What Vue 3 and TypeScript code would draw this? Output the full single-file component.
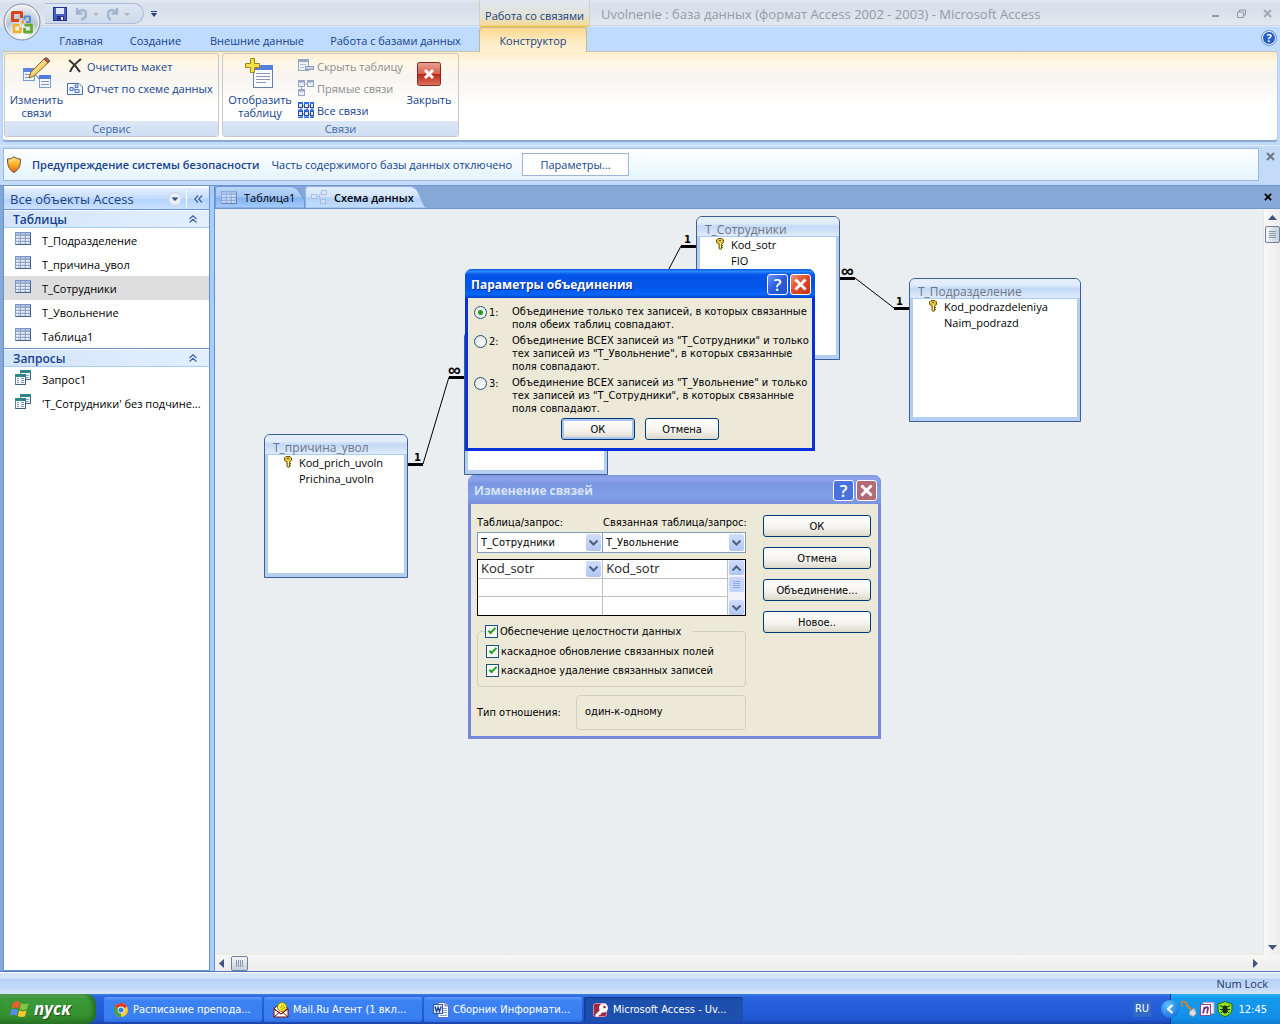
<script setup lang="ts">
import { ref } from 'vue'

interface NavGroup {
  title: string
  icon: string
  items: string[]
}
interface TableNode {
  id: string
  title: string
  fields: string[]
  x: number
  y: number
  w: number
}
interface Task {
  icon: string
  label: string
  active?: boolean
}

const menuTabs: string[] = ['Главная', 'Создание', 'Внешние данные', 'Работа с базами данных']

const navGroups: NavGroup[] = [
  { title: 'Таблицы', icon: 'i-table', items: ['Т_Подразделение', 'Т_причина_увол', 'Т_Сотрудники', 'Т_Увольнение', 'Таблица1'] },
  { title: 'Запросы', icon: 'i-query', items: ['Запрос1', "'Т_Сотрудники' без подчине..."] },
]
const selected = ref('Т_Сотрудники')

const nodes: TableNode[] = [
  { id: 'staff', title: 'Т_Сотрудники', fields: ['Kod_sotr', 'FIO'], x: 481, y: 7, w: 144 },
  { id: 'dept', title: 'Т_Подразделение', fields: ['Kod_podrazdeleniya', 'Naim_podrazd'], x: 694, y: 69, w: 172 },
  { id: 'fired', title: '', fields: [], x: 249, y: 122, w: 144 },
  { id: 'reason', title: 'Т_причина_увол', fields: ['Kod_prich_uvoln', 'Prichina_uvoln'], x: 49, y: 225, w: 144 },
]

const joinType = ref(1)
const joinOptions: string[] = [
  'Объединение только тех записей, в которых связанные\nполя обеих таблиц совпадают.',
  'Объединение ВСЕХ записей из "Т_Сотрудники" и только\nтех записей из "Т_Увольнение", в которых связанные\nполя совпадают.',
  'Объединение ВСЕХ записей из "Т_Увольнение" и только\nтех записей из "Т_Сотрудники", в которых связанные\nполя совпадают.',
]

const integrity = ref(true)
const cascadeUpdate = ref(true)
const cascadeDelete = ref(true)

const tasks: Task[] = [
  { icon: 'i-chrome', label: 'Расписание препода...' },
  { icon: 'i-mail', label: 'Mail.Ru Агент (1 вкл...' },
  { icon: 'i-word', label: 'Сборник Информати...' },
  { icon: 'i-access', label: 'Microsoft Access - Uv...', active: true },
]
</script>

<template>
  <div class="screen">
    <svg class="defs" width="0" height="0" aria-hidden="true">
      <defs>
        <linearGradient id="g-cell" x1="0" y1="0" x2="1" y2="1">
          <stop offset="0" stop-color="#ffffff" />
          <stop offset="1" stop-color="#b9c8e6" />
        </linearGradient>
        <linearGradient id="g-shield" x1="0" y1="0" x2="0" y2="1">
          <stop offset="0" stop-color="#ffe27a" />
          <stop offset="0.45" stop-color="#fdb62f" />
          <stop offset="1" stop-color="#e8600c" />
        </linearGradient>
        <linearGradient id="g-red" x1="0" y1="0" x2="0" y2="1">
          <stop offset="0" stop-color="#e9a397" />
          <stop offset="0.5" stop-color="#d9604f" />
          <stop offset="0.5" stop-color="#b92514" />
          <stop offset="1" stop-color="#e0765f" />
        </linearGradient>
        <symbol id="i-table" viewBox="0 0 16 13">
          <rect x="0" y="0" width="16" height="13" fill="#44618f" />
          <rect x="1" y="1" width="14" height="2" fill="#a9bfe6" />
          <g fill="url(#g-cell)">
            <rect x="1" y="4" width="4" height="2" /><rect x="6" y="4" width="4" height="2" /><rect x="11" y="4" width="4" height="2" />
            <rect x="1" y="7" width="4" height="2" /><rect x="6" y="7" width="4" height="2" /><rect x="11" y="7" width="4" height="2" />
            <rect x="1" y="10" width="4" height="2" /><rect x="6" y="10" width="4" height="2" /><rect x="11" y="10" width="4" height="2" />
          </g>
          <path d="M1 3.500H15M1 6.500H15M1 9.500H15M5.500 1V12M10.500 1V12" stroke="#8fa3c8" />
          <path d="M0.500 13V0.500H16" fill="none" stroke="#7d97c6" />
        </symbol>
        <symbol id="i-query" viewBox="0 0 16 15">
          <rect x="5.500" y="0.500" width="10" height="9" fill="#f4f8fc" stroke="#6d8d9a" />
          <rect x="5" y="0" width="11" height="3" fill="#2f8585" />
          <path d="M11 5.500H14M11 7.500H14" stroke="#86a3b4" />
          <rect x="0.500" y="4.500" width="10" height="10" fill="#f4f8fc" stroke="#6b7f99" />
          <rect x="0" y="4" width="11" height="3" fill="#2f8585" />
          <path d="M2 8.500H4M6 8.500H9M2 10.500H4M6 10.500H9M2 12.500H4M6 12.500H9" stroke="#8097b0" />
          <path d="M15.500 3V9.500H11M10.500 7V14.500H1" fill="none" stroke="#3c5f86" />
        </symbol>
        <symbol id="i-key" viewBox="0 0 8 12">
          <path d="M2 0.500H6L7.500 2V4.500L5.500 6V11L4.500 11.500L3 10.500V6L0.500 4.500V2Z" fill="#e3c23c" stroke="#6b5410" />
          <path d="M3 2.500H5" stroke="#6b5410" />
          <path d="M4.500 5V10" stroke="#fff2a0" />
          <path d="M5 7.500H7M5 9.500H7" stroke="#6b5410" />
        </symbol>
        <symbol id="i-chrome" viewBox="0 0 16 16">
          <circle cx="8" cy="8" r="7" fill="#f7c92f" />
          <path d="M8 8L1.900 4.500A7 7 0 0 1 14.100 4.500Z" fill="#dd3b2a" />
          <path d="M8 8L1.900 4.500A7 7 0 0 0 8 15Z" fill="#3f9e49" />
          <circle cx="8" cy="8" r="3.400" fill="#fff" /><circle cx="8" cy="8" r="2.600" fill="#3f7fd6" />
        </symbol>
        <symbol id="i-mail" viewBox="0 0 16 16">
          <path d="M1 6.500H15V15H1Z" fill="#fff" stroke="#7a1010" />
          <path d="M1 6.500L8 1L15 6.500L8 12Z" fill="#fff" stroke="#7a1010" />
          <circle cx="9" cy="5" r="4.500" fill="#f8f236" stroke="#8b7d12" />
          <path d="M1 7L8 12L15 7M1 15L6 10.500M15 15L10 10.500" fill="none" stroke="#7a1010" />
          <path d="M7 6L11 3M8 8L12 5" stroke="#a59a18" />
        </symbol>
        <symbol id="i-word" viewBox="0 0 16 16">
          <path d="M5 0.500H12L15.500 4V15.500H5Z" fill="#fff" stroke="#5671ab" />
          <path d="M12 0.500V4H15.500" fill="#c9d8f2" stroke="#5671ab" />
          <path d="M10 6.500H14M10 8.500H14M10 10.500H14M7 13.500H14" stroke="#7d9bd6" />
          <rect x="0.500" y="2.500" width="9" height="9" fill="#dfeafc" stroke="#3158a8" />
          <path d="M2 4.500L3.500 9.500L5 5.500L6.500 9.500L8 4.500" fill="none" stroke="#24479a" stroke-width="1.400" />
        </symbol>
        <symbol id="i-access" viewBox="0 0 16 16">
          <rect x="0.500" y="1.500" width="13" height="13" rx="2" fill="#a02843" stroke="#d98b9a" />
          <circle cx="10.500" cy="6" r="4.500" fill="#fff" />
          <path d="M8 7L2.500 12.500V14.500H5.500L6 13H7.500L8 11.500L11 9Z" fill="#fff" />
          <circle cx="11.500" cy="5" r="1.300" fill="#a02843" />
        </symbol>
        <symbol id="i-x" viewBox="0 0 9 9">
          <path d="M1 1L8 8M8 1L1 8" stroke="currentColor" stroke-width="2" />
        </symbol>
        <symbol id="i-chev" viewBox="0 0 9 6">
          <path d="M0.500 0.500L4.500 4.500L8.500 0.500" fill="none" stroke="#4d6185" stroke-width="2" />
        </symbol>
        <symbol id="i-up2" viewBox="0 0 8 8">
          <path d="M0.500 4L4 0.800L7.500 4M0.500 7.500L4 4.300L7.500 7.500" fill="none" stroke="#3f63a3" stroke-width="1.200" />
        </symbol>
      </defs>
    </svg>

    <header class="titlebar">
      <button class="orb" aria-label="Office">
        <svg width="38" height="38" viewBox="0 0 38 38">
          <defs>
            <radialGradient id="g-orb" cx="0.500" cy="0.900" r="0.900">
              <stop offset="0" stop-color="#ffffff" />
              <stop offset="0.450" stop-color="#d5dbe5" />
              <stop offset="0.550" stop-color="#b9c3d2" />
              <stop offset="1" stop-color="#f6f8fb" />
            </radialGradient>
          </defs>
          <circle cx="19" cy="19" r="18" fill="url(#g-orb)" stroke="#7f8da3" />
          <circle cx="19" cy="19" r="16.500" fill="none" stroke="#f7f9fc" />
          <g fill="none" stroke-linejoin="round">
            <path d="M16 17.500H9.500V9.500H18.500V15" stroke="#d9461c" stroke-width="3" />
            <path d="M21.500 17V13.500H27V19H23" stroke="#4f8fd8" stroke-width="2" />
            <path d="M16.500 22H11V29H17.500V24" stroke="#f2b11f" stroke-width="2.500" />
            <path d="M21.500 22H28.500V29H21.500V25" stroke="#65a82e" stroke-width="2.800" />
          </g>
          <path d="M18.500 17.500H21V20.500H18.500Z" fill="#f49a1d" />
        </svg>
      </button>
      <div class="qat">
        <button aria-label="Сохранить">
          <svg width="14" height="14" viewBox="0 0 14 14">
            <rect x="0.500" y="0.500" width="13" height="13" fill="#4a5fc4" stroke="#27348b" />
            <rect x="3" y="1" width="8" height="6" fill="#dfeafc" /><rect x="4" y="9" width="7" height="4" fill="#27348b" /><rect x="8" y="10" width="2" height="3" fill="#eef4ff" />
          </svg>
        </button>
        <button aria-label="Отменить" class="undo">
          <svg width="24" height="14" viewBox="0 0 24 14">
            <path d="M2 1V6.500H7.500M2.500 6C5 2 11 2 11 7C11 10 9 12 6 12.500" fill="none" stroke="#a3b4d2" stroke-width="2.400" />
            <path d="M18 6H24L21 9Z" fill="#a9b4c6" />
          </svg>
        </button>
        <button aria-label="Вернуть">
          <svg width="24" height="14" viewBox="0 0 24 14">
            <path d="M11 1V6.500H5.500M10.500 6C8 2 2 2 2 7C2 10 3 12 5 12.500" fill="none" stroke="#a3b4d2" stroke-width="2.400" />
            <path d="M18 6H24L21 9Z" fill="#a9b4c6" />
          </svg>
        </button>
      </div>
      <button class="qat-more" aria-label="Настройка панели">
        <svg width="6" height="6" viewBox="0 0 6 6"><path d="M0 0.500H6" stroke="#24407e" /><path d="M0 2H6L3 6Z" fill="#24407e" /></svg>
      </button>
      <div class="context-title">Работа со связями</div>
      <h1>Uvolnenie : база данных (формат Access 2002 - 2003) - Microsoft Access</h1>
      <div class="win-controls">
        <button aria-label="Свернуть"><svg width="9" height="9"><path d="M1 7H8" stroke="#8f98a5" stroke-width="2" /></svg></button>
        <button aria-label="Восстановить"><svg width="9" height="9"><path d="M2.500 3V1H8.500V6H7M0.500 3H6.500V8.500H0.500Z" fill="none" stroke="#8f98a5" /></svg></button>
        <button aria-label="Закрыть"><svg width="9" height="9"><use href="#i-x" /></svg></button>
      </div>
    </header>

    <nav class="menu">
      <button v-for="t in menuTabs" :key="t" class="menu-tab">{{ t }}</button>
      <button class="menu-tab current">Конструктор</button>
      <button class="help" aria-label="Справка">?</button>
    </nav>

    <section class="ribbon">
      <div class="group">
        <div class="group-body">
          <button class="big">
            <svg width="30" height="32" viewBox="0 0 30 32">
              <rect x="1.500" y="11.500" width="11" height="12" fill="#eef4fd" stroke="#7f9bd0" /><rect x="1" y="11" width="12" height="4" fill="#5b86df" />
              <path d="M3 17.500H9M3 20.500H8" stroke="#7d94bf" />
              <rect x="17.500" y="18.500" width="11" height="12" fill="#f4f8fe" stroke="#7f9bd0" /><rect x="17" y="18" width="12" height="4" fill="#4f7ddb" />
              <path d="M19 24.500H27M19 27.500H27" stroke="#7d94bf" />
              <path d="M13 17L17 22" stroke="#4d5a70" />
              <path d="M7 21L9 15L23 1L27 5L12 19Z" fill="#f6cf6b" stroke="#8e6a2a" />
              <path d="M22 2L26 6L28 4L24.500 0.500Z" fill="#c8505a" stroke="#5d5148" />
              <path d="M11 16L23 4" stroke="#fff0b8" />
            </svg>
            <span>Изменить<br />связи</span>
          </button>
          <div class="stack">
            <button class="small">
              <svg width="18" height="16" viewBox="0 0 18 16"><path d="M3 2C7 5 11 9 14 14M15 1C11 4 6 9 4 14" fill="none" stroke="#333" stroke-width="2" /></svg>Очистить макет
            </button>
            <button class="small">
              <svg width="18" height="16" viewBox="0 0 18 16">
                <path d="M1.500 3.500H13L16.500 7V14.500H1.500Z" fill="#f2f6fd" stroke="#4f6da3" /><path d="M4 7.500H7V10.500H4ZM9 9.500H13V12.500H9ZM9 5H12V7.500H9ZM7 9H9" fill="#dbe7fa" stroke="#4874c4" />
              </svg>Отчет по схеме данных
            </button>
          </div>
        </div>
        <div class="group-title">Сервис</div>
      </div>
      <div class="group second">
        <div class="group-body">
          <button class="big wide">
            <svg width="30" height="32" viewBox="0 0 30 32">
              <rect x="8.500" y="8.500" width="19" height="22" fill="#fafcff" stroke="#6a7fae" /><rect x="8" y="8" width="20" height="5" fill="#5380dc" />
              <path d="M11 16.500H25M11 19.500H25M11 22.500H25M11 25.500H21" stroke="#8b98b5" />
              <path d="M5.500 1.500H9.500V6.500H14.500V10.500H9.500V15.500H5.500V10.500H0.500V6.500H5.500Z" fill="#f5e04a" stroke="#9c8614" />
            </svg>
            <span>Отобразить<br />таблицу</span>
          </button>
          <div class="stack mid">
            <button class="small off" disabled>
              <svg width="16" height="16" viewBox="0 0 16 16">
                <rect x="0.500" y="1.500" width="10" height="11" fill="#eef1f7" stroke="#97a6c4" /><rect x="0" y="1" width="11" height="3" fill="#97a6c4" />
                <path d="M2 6.500H8M2 9.500H6" stroke="#b1bdd4" /><rect x="7.500" y="8.500" width="8" height="3" fill="#c6d2e8" stroke="#8b9cc0" />
              </svg>Скрыть таблицу
            </button>
            <button class="small off" disabled>
              <svg width="16" height="16" viewBox="0 0 16 16" fill="#e8edf6" stroke="#97a6c4">
                <path d="M6 4H10M3.500 6V10" /><rect x="0.500" y="0.500" width="6" height="6" /><rect x="9.500" y="0.500" width="6" height="6" /><rect x="0.500" y="9.500" width="6" height="6" />
                <path d="M0 1.500H7M9 1.500H16M0 10.500H7" stroke-width="2" />
              </svg>Прямые связи
            </button>
            <button class="small">
              <svg width="16" height="16" viewBox="0 0 16 16" fill="#dce8fc" stroke="#2a4a8c">
                <path d="M0 4H16M0 12H16M3 0V16M9 0V16M14 0V16" />
                <rect x="0.500" y="1.500" width="4" height="4" /><rect x="6.500" y="1.500" width="4" height="4" /><rect x="12.500" y="1.500" width="3" height="4" />
                <rect x="0.500" y="9.500" width="4" height="4" /><rect x="6.500" y="9.500" width="4" height="4" /><rect x="12.500" y="9.500" width="3" height="4" />
                <path d="M0 1H5M6 1H11M12 1H16M0 8.500H5M6 8.500H11M12 8.500H16M0 15.500H5M6 15.500H11M12 15.500H16" stroke="#2e6fe6" stroke-width="2" />
              </svg>Все связи
            </button>
          </div>
          <button class="big close">
            <svg width="30" height="32" viewBox="0 0 30 32">
              <rect x="3.500" y="5.500" width="23" height="23" rx="2" fill="url(#g-red)" stroke="#7e2a20" />
              <path d="M11 13L19 21M19 13L11 21" stroke="#fff" stroke-width="3" />
            </svg>
            <span>Закрыть</span>
          </button>
        </div>
        <div class="group-title">Связи</div>
      </div>
    </section>

    <section class="alert">
      <div class="alert-box">
        <svg width="14" height="17" viewBox="0 0 14 17">
          <path d="M7 0.500C8 2 11 3 13.500 3C13.500 9 12.500 13.500 7 16.500C1.500 13.500 0.500 9 0.500 3C3 3 6 2 7 0.500Z" fill="url(#g-shield)" stroke="#5d5147" />
          <path d="M3 5C5 5 6 4 7 3" fill="none" stroke="#fff3c0" />
        </svg>
        <strong>Предупреждение системы безопасности</strong>
        <span>Часть содержимого базы данных отключено</span>
        <button class="params">Параметры...</button>
      </div>
      <button class="alert-x" aria-label="Закрыть сообщение"><svg width="9" height="9"><use href="#i-x" /></svg></button>
    </section>

    <main class="work">
      <aside class="nav">
        <div class="nav-head">
          <span>Все объекты Access</span>
          <button aria-label="Выбор категории">
            <svg width="14" height="14" viewBox="0 0 14 14"><circle cx="7" cy="7" r="6.500" fill="#e9eef6" stroke="#c3d0e4" /><path d="M3.500 5.500H10.500L7 9Z" fill="#2f4a86" /></svg>
          </button>
          <button class="fold" aria-label="Свернуть область">
            <svg width="9" height="8" viewBox="0 0 9 8"><path d="M4 0.500L0.800 4L4 7.500M8 0.500L4.800 4L8 7.500" fill="none" stroke="#3f63a3" stroke-width="1.200" /></svg>
          </button>
        </div>
        <section v-for="g in navGroups" :key="g.title" class="nav-group">
          <h2>{{ g.title }}<svg width="8" height="8"><use href="#i-up2" /></svg></h2>
          <ul>
            <li v-for="i in g.items" :key="i" :class="{ sel: i === selected }" @click="selected = i">
              <svg width="16" :height="g.icon === 'i-table' ? 13 : 15"><use :href="'#' + g.icon" /></svg>{{ i }}
            </li>
          </ul>
        </section>
      </aside>

      <div class="doc">
        <div class="doc-tabs">
          <button class="doc-tab">
            <svg class="shape" width="90" height="22" viewBox="0 0 90 22">
              <defs><linearGradient id="g-tab" x1="0" y1="0" x2="0" y2="1"><stop offset="0" stop-color="#bcd6f8" /><stop offset="0.450" stop-color="#a3c8f6" /><stop offset="0.550" stop-color="#86b3ef" /><stop offset="1" stop-color="#a5cdfc" /></linearGradient></defs>
              <path d="M0.500 22V3Q0.500 0.500 3 0.500H76Q80 0.500 83 4L89.500 14V22Z" fill="url(#g-tab)" stroke="#6f97d0" />
            </svg>
            <svg class="pic" width="16" height="13"><use href="#i-table" /></svg><span>Таблица1</span>
          </button>
          <button class="doc-tab front">
            <svg class="shape" width="122" height="22" viewBox="0 0 122 22">
              <defs><linearGradient id="g-tab2" x1="0" y1="0" x2="0" y2="1"><stop offset="0" stop-color="#e3eefd" /><stop offset="0.450" stop-color="#d3e4fb" /><stop offset="0.550" stop-color="#b5d4fc" /><stop offset="1" stop-color="#c1dcff" /></linearGradient></defs>
              <path d="M0.500 22V3Q0.500 0.500 3 0.500H104Q110 0.500 113 6L118 18Q119 21 122 22Z" fill="url(#g-tab2)" stroke="#8fb4e4" />
            </svg>
            <svg class="pic" width="16" height="14" viewBox="0 0 16 14" fill="#dbe7f8" stroke="#93acd3">
              <path d="M5 6H8L10 2.500M8 6L10 11.500" fill="none" /><rect x="0.500" y="4.500" width="5" height="4" /><rect x="10.500" y="0.500" width="5" height="4" /><rect x="9.500" y="9.500" width="5" height="4" />
            </svg><span>Схема данных</span>
          </button>
          <button class="doc-x" aria-label="Закрыть вкладку"><svg width="8" height="8"><use href="#i-x" /></svg></button>
        </div>
        <div class="canvas-row">
          <div class="canvas">
            <svg class="links" width="1040" height="740" viewBox="0 0 1040 740">
              <g fill="none" stroke="#000">
                <path d="M466 37L393 176M640 69L679 99M208 255L234 168" />
                <path d="M466 37.500H481M625 69.500H640M679 99.500H694M193 255.500H208M234 168.500H249" stroke-width="3" />
              </g>
              <g class="marks">
                <text x="469" y="34">1</text><text x="681" y="96">1</text><text x="199" y="252">1</text>
                <text class="inf" x="626" y="68">∞</text><text class="inf" x="233" y="167">∞</text>
              </g>
            </svg>
            <section v-for="n in nodes" :key="n.id" class="node" :style="{ left: n.x + 'px', top: n.y + 'px', width: n.w + 'px' }">
              <h3>{{ n.title }}</h3>
              <ul>
                <li v-for="(f, k) in n.fields" :key="f">
                  <svg v-if="k === 0" width="8" height="12"><use href="#i-key" /></svg>{{ f }}
                </li>
              </ul>
            </section>
          </div>
          <div class="vbar">
            <svg width="9" height="5"><path d="M0 5L4.500 0L9 5Z" fill="#42557c" /></svg>
            <div class="thumb"></div>
            <svg class="end" width="9" height="5"><path d="M0 0L4.500 5L9 0Z" fill="#42557c" /></svg>
          </div>
        </div>
        <div class="hbar">
          <svg width="5" height="9"><path d="M5 0L0 4.500L5 9Z" fill="#42557c" /></svg>
          <div class="thumb"></div>
          <svg class="end" width="5" height="9"><path d="M0 0L5 4.500L0 9Z" fill="#42557c" /></svg>
        </div>
      </div>

      <section class="dialog edit" role="dialog" aria-label="Изменение связей">
        <header>
          <h2>Изменение связей</h2>
          <button class="cap q" aria-label="Справка">?</button>
          <button class="cap c" aria-label="Закрыть"><svg width="13" height="13" viewBox="0 0 9 9"><use href="#i-x" /></svg></button>
        </header>
        <div class="edit-body">
          <div class="edit-main">
            <div class="pair">
              <div class="field">
                <label for="t1">Таблица/запрос:</label>
                <div class="combo"><select id="t1"><option>Т_Сотрудники</option></select><i><svg width="9" height="6"><use href="#i-chev" /></svg></i></div>
              </div>
              <div class="field right">
                <label for="t2">Связанная таблица/запрос:</label>
                <div class="combo"><select id="t2"><option>Т_Увольнение</option></select><i><svg width="9" height="6"><use href="#i-chev" /></svg></i></div>
              </div>
            </div>
            <div class="grid">
              <table>
                <tbody>
                  <tr>
                    <td><div class="cell"><select aria-label="Поле"><option>Kod_sotr</option></select><i><svg width="9" height="6"><use href="#i-chev" /></svg></i></div></td>
                    <td><div class="cell">Kod_sotr</div></td>
                  </tr>
                  <tr><td></td><td></td></tr>
                  <tr><td></td><td></td></tr>
                </tbody>
              </table>
              <div class="mini-bar">
                <i><svg class="flip" width="9" height="6"><use href="#i-chev" /></svg></i>
                <i class="grip"></i>
                <i class="end"><svg width="9" height="6"><use href="#i-chev" /></svg></i>
              </div>
            </div>
            <fieldset>
              <legend><label><input v-model="integrity" type="checkbox" />Обеспечение целостности данных</label></legend>
              <label><input v-model="cascadeUpdate" type="checkbox" />каскадное обновление связанных полей</label>
              <label><input v-model="cascadeDelete" type="checkbox" />каскадное удаление связанных записей</label>
            </fieldset>
            <div class="kind"><span>Тип отношения:</span><output>один-к-одному</output></div>
          </div>
          <div class="edit-side">
            <button class="xp">ОК</button>
            <button class="xp">Отмена</button>
            <button class="xp">Объединение...</button>
            <button class="xp">Новое..</button>
          </div>
        </div>
      </section>

      <section class="dialog join" role="dialog" aria-label="Параметры объединения">
        <header>
          <h2>Параметры объединения</h2>
          <button class="cap q" aria-label="Справка">?</button>
          <button class="cap c" aria-label="Закрыть"><svg width="13" height="13" viewBox="0 0 9 9"><use href="#i-x" /></svg></button>
        </header>
        <div class="join-body">
          <label v-for="(text, k) in joinOptions" :key="k" class="opt">
            <input v-model="joinType" type="radio" name="join" :value="k + 1" />
            <span class="num">{{ k + 1 }}:</span>
            <span class="txt">{{ text }}</span>
          </label>
          <div class="join-actions">
            <button class="xp primary">ОК</button>
            <button class="xp">Отмена</button>
          </div>
        </div>
      </section>
    </main>

    <div class="status">Num Lock</div>

    <footer class="taskbar">
      <button class="start">
        <svg width="20" height="18" viewBox="0 0 20 18">
          <path d="M3 3Q6 0 10 2.500L8.500 8.500Q5 6.500 1.500 8.500Z" fill="#ef5b2b" />
          <path d="M11 3Q14 5 18.500 3L17 9Q13 11 9.500 9Z" fill="#86c440" />
          <path d="M1.200 9.800Q4.500 8 8 10L6.500 16Q3.500 14 0 15.500Z" fill="#5a8bf0" />
          <path d="M9.200 10.300Q13 12 16.500 10.300L15 16.300Q11 18 7.800 16Z" fill="#fbc92d" />
        </svg>
        <span>пуск</span>
      </button>
      <div class="tasks">
        <button v-for="t in tasks" :key="t.icon" class="task" :class="{ active: t.active }">
          <svg width="16" height="16"><use :href="'#' + t.icon" /></svg><span>{{ t.label }}</span>
        </button>
      </div>
      <span class="lang">RU</span>
      <div class="tray">
        <button class="expand" aria-label="Показать значки"><svg width="8" height="10" viewBox="0 0 8 10"><path d="M6.500 1L2 5L6.500 9" fill="none" stroke="#fff" stroke-width="2" /></svg></button>
        <svg width="16" height="16" viewBox="0 0 16 16">
          <path d="M1.500 5A2.500 2.500 0 1 1 5 3L11 10" fill="none" stroke="#d9822b" stroke-width="2" />
          <path d="M8 11L13 7L15.500 12L13 15.500L9 14.500Z" fill="#d8dde2" stroke="#8a949e" />
        </svg>
        <svg width="16" height="16" viewBox="0 0 16 16">
          <path d="M4 1.500H15V12.500H4Z" fill="#f7f2f9" stroke="#b9a9c4" /><rect x="1.500" y="3.500" width="10" height="11" fill="#fff" stroke="#8a4b8f" />
          <path d="M4 12.500L5.500 6M5 8Q9 4.500 9 7.500L8 12.500" fill="none" stroke="#7c2f85" stroke-width="1.800" />
        </svg>
        <svg width="16" height="16" viewBox="0 0 16 16">
          <path d="M8 0.500L15 3V9Q14 14 8 15.500Q2 14 1 9V3Z" fill="#8fe02a" stroke="#2a6b0e" />
          <path d="M3 4.500L6 6M3 8.500H6M4 12L6 10M13 4.500L10 6M13 8.500H10M12 12L10 10" stroke="#14300a" />
          <ellipse cx="8" cy="8.500" rx="2.500" ry="4" fill="#14300a" />
        </svg>
        <time>12:45</time>
      </div>
    </footer>
  </div>
</template>

<style>
html,
body {
  margin: 0;
  background: #bfdbff;
}
</style>

<style scoped>
.screen {
  --ui: 'Open Sans', 'Noto Sans', sans-serif;
  --xp: 'DejaVu Sans Condensed', 'DejaVu Sans', sans-serif;
  display: flex;
  flex-direction: column;
  min-height: 100vh;
  font: 11px/13px var(--ui);
  color: #15428b;
  background: #bfdbff;
  overflow: hidden;
}
.defs { position: absolute; }
.screen *, .screen *::before { box-sizing: border-box; }
button, select, input {
  margin: 0;
  padding: 0;
  border: 0;
  background: none;
  font: inherit;
  color: inherit;
  appearance: none;
}
h1, h2, h3, ul { margin: 0; padding: 0; font-weight: normal; list-style: none; }
svg { display: block; flex: none; }

/* Title bar */
.titlebar {
  position: relative;
  display: flex;
  align-items: center;
  height: 27px;
  padding-left: 45px;
  background: linear-gradient(#e1e8f1 0, #d6dfea 20%, #e0e8f0 92%, #c9d5e4 94%, #e6edf6);
}
.orb { position: absolute; left: 3px; top: 3px; z-index: 3; }
.qat {
  display: flex;
  align-items: center;
  width: 99px;
  height: 21px;
  padding-left: 8px;
  border: 1px solid #a9bddb;
  border-left: 0;
  border-radius: 0 11px 11px 0;
  background: linear-gradient(#dde6f2, #cfdbeb);
}
.qat .undo { margin: 0 7px 0 8px; }
.qat-more { margin-left: 7px; }
.context-title {
  align-self: stretch;
  width: 111px;
  margin-left: 322px;
  padding-top: 9px;
  border: 1px solid #cfd2c8;
  border-width: 0 1px;
  text-align: center;
  white-space: nowrap;
  background: linear-gradient(#dfe6ee 10%, #e3e2d3 60%, #f4dc9a 92%, #efb93e);
}
h1 {
  margin-left: 11px;
  font-size: 13px;
  line-height: 18px;
  color: #949ba5;
  white-space: nowrap;
}
.win-controls { display: flex; gap: 17px; margin: 0 8px 0 auto; color: #a2a9b3; }

/* Ribbon tabs */
.menu { display: flex; align-items: stretch; height: 24px; padding-left: 45px; }
.menu-tab { height: 24px; padding: 2px 0 0; white-space: nowrap; width: 72px; }
.menu-tab:nth-child(2) { width: 77px; }
.menu-tab:nth-child(3) { width: 126px; }
.menu-tab:nth-child(4) { width: 151px; }
.menu-tab.current {
  z-index: 1;
  width: 108px;
  height: 25px;
  margin-left: 8px;
  padding: 0;
  border: 1px solid #c9b98d;
  border-bottom: 0;
  border-radius: 4px 4px 0 0;
  background: linear-gradient(#fbd98f, #fdecc4 60%, #fff2d6);
}
.help {
  width: 14px;
  height: 14px;
  margin: 4px 4px 0 auto;
  border: 1px solid #fff;
  border-radius: 7px;
  outline: 1px solid #6b93cc;
  background: #2360c9;
  color: #fff;
  font: bold 11px/12px var(--ui);
}

/* Ribbon */
.ribbon {
  display: flex;
  gap: 3px;
  height: 91px;
  margin: 0 2px 3px;
  padding: 1px 2px 3px;
  border: 1px solid #b5bcc4;
  border-width: 1px 1px 2px;
  border-color: #c5c2b4 #b9cfe9 #8fa9c9;
  border-radius: 4px;
  background: linear-gradient(#feedc8, #fff7e7 12%, #f7f5f0 28%, #fff 62%);
}
.group {
  display: flex;
  flex-direction: column;
  width: 215px;
  margin-left: -1px;
  border: 1px solid #c6c8ca;
  border-radius: 3px;
  overflow: hidden;
}
.group.second { width: 237px; margin-left: 0; }
.group-body { display: flex; flex: 1; padding: 1px 2px 0; }
.group-title {
  height: 15px;
  text-align: center;
  line-height: 16px;
  color: #3e6aaa;
  background: linear-gradient(#dce7f5, #cfdff3);
}
.big {
  display: flex;
  flex-direction: column;
  align-items: center;
  width: 59px;
  padding-top: 2px;
  white-space: nowrap;
}
.big span { margin-top: 4px; }
.big.wide { width: 70px; }
.big.close { width: 50px; }
.stack.mid { width: 109px; padding-left: 3px; }
.small { display: flex; align-items: center; gap: 3px; height: 22px; white-space: nowrap; }
.small.off { color: #8d8d8d; }

/* Message bar */
.alert {
  display: flex;
  height: 40px;
  padding: 2px 0 4px 3px;
  border-top: 1px solid #e3eefd;
  background: #c3daf9;
}
.alert-box {
  display: flex;
  flex: 1;
  align-items: center;
  height: 33px;
  padding-left: 3px;
  border: 1px solid #9ebbdd;
  background: linear-gradient(#fff, #e4f4fe);
}
.alert-box strong { margin: 0 12px 0 11px; font-weight: 600; }
.params { width: 107px; height: 23px; margin-left: 10px; border: 1px solid #9ab7d8; background: #fff; }
.alert-x { align-self: flex-start; margin: 4px 5px 0 7px; color: #6b7888; }

/* Work area */
.work {
  position: relative;
  display: flex;
  flex: 1;
  border-top: 1px solid #6f95cf;
  border-bottom: 1px solid #4f79b5;
  background: #86a8d6;
}
.nav {
  width: 207px;
  margin-left: 3px;
  border: 1px solid #6593cf;
  border-top: 0;
  background: #fff;
  color: #000;
}
.nav-head {
  display: flex;
  align-items: center;
  height: 24px;
  padding: 0 4px 0 6px;
  border-top: 2px solid #fff;
  border-bottom: 1px solid #6593cf;
  background: linear-gradient(#e3efff, #c4dcfd 50%, #b1d2fd 51%, #cbe1ff);
  color: #1f3f7e;
  font-size: 13px;
  line-height: 18px;
}
.nav-head button { margin-left: auto; padding-right: 4px; }
.nav-head .fold { display: flex; align-items: center; height: 18px; margin-left: 0; padding: 0 2px 0 7px; border-left: 1px solid #fff; }
.nav-group h2 {
  display: flex;
  align-items: center;
  justify-content: space-between;
  height: 18px;
  padding: 0 12px 0 9px;
  border-top: 1px solid #fff;
  border-bottom: 1px solid #a9cbf8;
  background: linear-gradient(90deg, #d3e5fb, #e3efff);
  color: #15428b;
  font-size: 12px;
  line-height: 15px;
  font-weight: 600;
}
.nav-group + .nav-group { border-top: 1px solid #6593cf; }
.nav li { display: flex; align-items: center; gap: 11px; height: 24px; padding-left: 11px; white-space: nowrap; }
.nav li svg { margin-bottom: 3px; }
.nav li.sel { background: #dedede; }

.doc {
  display: flex;
  flex: 1;
  flex-direction: column;
  min-width: 0;
  border-left: 4px solid #a9ccfb;
  box-shadow: inset 1px 0 #6593cf;
  padding-left: 1px;
}
.doc-tabs { display: flex; height: 23px; border-bottom: 1px solid #6f97d0; color: #000; }
.doc-tab { position: relative; display: flex; width: 90px; height: 22px; align-items: center; }
.doc-tab.front { width: 122px; font-weight: 600; }
.doc-tab .shape { position: absolute; left: 0; top: 0; }
.doc-tab .pic { z-index: 1; margin-left: 6px; opacity: 0.6; }
.doc-tab span { z-index: 1; margin-left: 7px; white-space: nowrap; }
.doc-x { margin: 0 8px 0 auto; }
.canvas-row { display: flex; flex: 1; }
.canvas {
  position: relative;
  flex: 1;
  overflow: hidden;
  border: 1px solid #ece9d8;
  border-width: 0 1px 1px 0;
  background: #eaeef1;
  color: #000;
}
.links { position: absolute; left: 0; top: 0; }
.marks { font: bold 10px 'DejaVu Sans', sans-serif; }
.marks .inf { font: bold 18px 'Liberation Sans', sans-serif; }
.node {
  position: absolute;
  height: 144px;
  padding: 0 3px 4px;
  border: 1px solid #3d5f92;
  border-radius: 6px 6px 0 0;
  background: #b4cef2;
  display: flex;
  flex-direction: column;
}
.node h3 { height: 20px; margin: 0 -3px; padding: 4px 0 0 8px; border-bottom: 1px solid #a9cbf8; border-radius: 5px 5px 0 0; background: linear-gradient(#e3eefc 30%, #c3d9f6 50%, #dfebfb); color: #6e7685; font-size: 12px; line-height: 17px; }
.node ul { flex: 1; background: #fff; }
.node li { position: relative; height: 16px; padding-left: 31px; line-height: 16px; white-space: nowrap; }
.node li svg { position: absolute; left: 16px; top: 1px; }

.vbar, .hbar { display: flex; align-items: center; background: linear-gradient(#f6f6f6, #ececec); }
.vbar { flex-direction: column; width: 16px; padding: 6px 0 5px; background: linear-gradient(90deg, #f8f8f8, #ececec); }
.hbar { height: 16px; padding: 0 22px 0 4px; }
.thumb { width: 15px; height: 17px; border: 1px solid #6f7f9c; border-radius: 2px; background: repeating-linear-gradient(#8a95a8 0 1px, transparent 1px 2px) 50% / 7px 8px no-repeat, linear-gradient(90deg, #f4f6f9, #c5cfdd); }
.vbar .thumb { margin-top: 6px; }
.hbar .thumb { width: 17px; height: 15px; margin-left: 7px; background: repeating-linear-gradient(90deg, #8a95a8 0 1px, transparent 1px 2px) 50% / 8px 7px no-repeat, linear-gradient(#f4f6f9, #c5cfdd); }
.vbar .end { margin-top: auto; }
.hbar .end { margin-left: auto; }

/* Dialogs */
.dialog {
  position: absolute;
  border-radius: 7px 7px 0 0;
  background: #ece9d8;
  color: #000;
  font: 11px/13px var(--xp);
}
.dialog header {
  display: flex;
  align-items: center;
  height: 29px;
  gap: 2px;
  padding: 2px 4px 0 6px;
  border-radius: 7px 7px 0 0;
}
.dialog h2 { flex: 1; color: #fff; font: bold 12px/18px var(--ui); white-space: nowrap; }
.cap {
  display: flex;
  align-items: center;
  justify-content: center;
  width: 21px;
  height: 21px;
  border: 1px solid #fff;
  border-radius: 3px;
  color: #fff;
  font: 600 17px/18px var(--ui);
  background: linear-gradient(135deg, #7196f4, #2a5bdc 50%, #2452c8);
}
.cap.c { background: linear-gradient(135deg, #f09274, #e0492a 50%, #c33516); }
.join { left: 465px; top: 83px; width: 350px; z-index: 2; border: 3px solid #0831d9; border-top: 0; }
.join header { margin: 0 -3px; background: linear-gradient(#0a52d8, #2a8aff 8%, #0354e6 20%, #0355ea 60%, #0665fb 88%, #0442c6); }
.join h2 { text-shadow: 1px 1px #0a2a8a; }
.join-body { height: 150px; padding: 7px 6px 0; display: flex; flex-direction: column; }
.opt { display: flex; margin-bottom: 3px; }
.opt input { flex: none; width: 13px; height: 13px; margin-top: 1px; border: 1px solid #1d5281; border-radius: 7px; background: radial-gradient(circle at 70% 70%, #fff, #dcdcd7); }
.opt input:checked { background: radial-gradient(circle at 50% 50%, #21a121 2px, #f2f2ee 3px); }
.num { flex: none; width: 23px; margin: 1px 0 0 2px; }
.txt { white-space: pre; }
.join-actions { display: flex; gap: 10px; margin-left: 87px; }
.xp {
  width: 74px;
  height: 22px;
  border: 1px solid #003c74;
  border-radius: 3px;
  background: linear-gradient(#fff, #f3f2ec 60%, #dcd8cc);
  line-height: 19px;
  white-space: nowrap;
}
.xp.primary { box-shadow: inset 0 0 0 2px #a9c4f4; }

.edit { left: 468px; top: 289px; width: 413px; z-index: 1; border: 3px solid #7489dc; border-top: 0; }
.edit header { margin: 0 -3px; background: linear-gradient(#7a96df, #8fa5ea 10%, #7b96e1 30%, #7fa0e8 75%, #7a90dd); }
.edit h2 { color: #d8e4f8; }
.edit .c { background: #b06a78; }
.edit .q { background: #4a72dc; }
.edit-body { display: flex; gap: 17px; height: 232px; padding: 11px 7px 0 6px; }
.edit-main { width: 269px; }
.pair { display: flex; }
.field { width: 126px; }
.field.right { width: 143px; }
.field label { display: block; height: 17px; padding-top: 1px; white-space: nowrap; }
.combo { position: relative; height: 21px; border: 1px solid #7f9db9; background: #fff; }
.combo select { width: 100%; height: 19px; padding-left: 3px; line-height: 19px; }
.combo i, .cell i, .mini-bar i {
  display: flex;
  align-items: center;
  justify-content: center;
  width: 15px;
  height: 17px;
  border-radius: 2px;
  background: linear-gradient(#d0defc, #b2c6f2);
}
.combo i { position: absolute; right: 1px; top: 1px; pointer-events: none; }
.field.right .combo { margin-left: -1px; }
.grid { display: flex; height: 57px; margin-top: 6px; border: 1px solid #000; background: #fff; }
table { width: 250px; height: 55px; border-collapse: collapse; table-layout: fixed; font: 13px/17px var(--ui); color: #1c1c1c; }
td { height: 18px; padding: 0; border: 1px solid #c0c0c0; border-width: 0 1px 1px 0; }
tr:last-child td { border-bottom: 0; }
.cell { position: relative; display: flex; height: 17px; padding-left: 3px; align-items: center; }
.cell select { width: 100px; height: 17px; }
.cell i { position: absolute; right: 1px; top: 1px; height: 16px; pointer-events: none; }
.mini-bar { display: flex; flex: 1; flex-direction: column; align-items: center; background: #f3f2fb; }
.mini-bar i { height: 15px; }
.mini-bar .grip { margin-top: 2px; background: repeating-linear-gradient(#93abe8 0 1px, transparent 1px 2px) 50% / 7px 7px no-repeat, #c5d5fb; }
.mini-bar .end { margin-top: auto; }
.flip { transform: rotate(180deg); }
fieldset { height: 63px; margin: 8px 0 0; padding: 5px 0 0 8px; border: 1px solid #d0d0bf; border-radius: 4px; min-width: 0; }
legend { padding: 0 12px 0 0; margin-left: -1px; }
fieldset label { display: flex; align-items: center; gap: 2px; height: 15px; white-space: nowrap; }
fieldset > label { margin-bottom: 4px; }
fieldset input { flex: none; width: 13px; height: 13px; border: 1px solid #1d5281; background: #f6f6f3; }
fieldset input:checked::before {
  content: '';
  display: block;
  width: 8px;
  height: 4px;
  margin: 2px 0 0 2px;
  border: solid #21a121;
  border-width: 0 0 2px 2px;
  transform: rotate(-45deg);
}
.kind { display: flex; align-items: center; justify-content: space-between; margin-top: 8px; }
.kind output { width: 170px; height: 35px; padding: 9px 0 0 8px; border: 1px solid #d0d0bf; border-radius: 4px; }
.edit-side { display: flex; flex: 1; flex-direction: column; gap: 10px; }
.edit-side .xp { width: 108px; }

/* Status and task bars */
.status {
  height: 22px;
  padding: 4px 12px 0 0;
  border-top: 1px solid #fff;
  text-align: right;
  color: #1b3a70;
  background: linear-gradient(#d5e5fa 0 25%, #b6d0f3 28%, #c3d9f8 70%, #d5e5fb);
}
.taskbar {
  display: flex;
  height: 30px;
  color: #fff;
  font: 11px/13px var(--xp);
  background: linear-gradient(#3a7be8 0, #2a63dc 12%, #245edb 50%, #2156d0 85%, #1a43a5);
}
.start {
  display: flex;
  align-items: center;
  gap: 4px;
  width: 96px;
  padding-left: 10px;
  border-radius: 0 10px 10px 0;
  background: linear-gradient(#6bb265 0, #3b9a3b 15%, #36912f 70%, #2a7426);
  box-shadow: inset -3px 0 4px #246b22;
}
.start span { font: italic bold 17px/20px var(--ui); text-shadow: 1px 1px 1px #1d4d1b; }
.tasks { display: flex; flex: 1; gap: 2px; padding: 3px 0 2px 8px; }
.task {
  display: flex;
  align-items: center;
  gap: 4px;
  width: 158px;
  padding-left: 9px;
  border-radius: 2px;
  background: linear-gradient(#5c9bf9, #3d82f4 15%, #3a7ff2 85%, #2e6ddc);
  white-space: nowrap;
}
.task.active { width: 159px; background: #1c4fae; box-shadow: inset 1px 1px 2px #123a86; }
.lang { align-self: center; margin-right: 9px; padding: 1px 2px 2px; background: #316ac5; }
.tray {
  display: flex;
  align-items: center;
  gap: 2px;
  width: 110px;
  margin-left: 10px;
  padding-right: 13px;
  border-left: 1px solid #0a3c9c;
  background: linear-gradient(#2bb0f5, #149aec 15%, #118fe9 80%, #0f7ad4);
}
.expand {
  display: flex;
  flex: none;
  align-items: center;
  justify-content: center;
  width: 18px;
  height: 18px;
  margin-left: -10px;
  border-radius: 9px;
  background: radial-gradient(circle at 40% 30%, #5fc3ff, #1a6fdc 80%);
}
.tray time { margin-left: auto; }
</style>
